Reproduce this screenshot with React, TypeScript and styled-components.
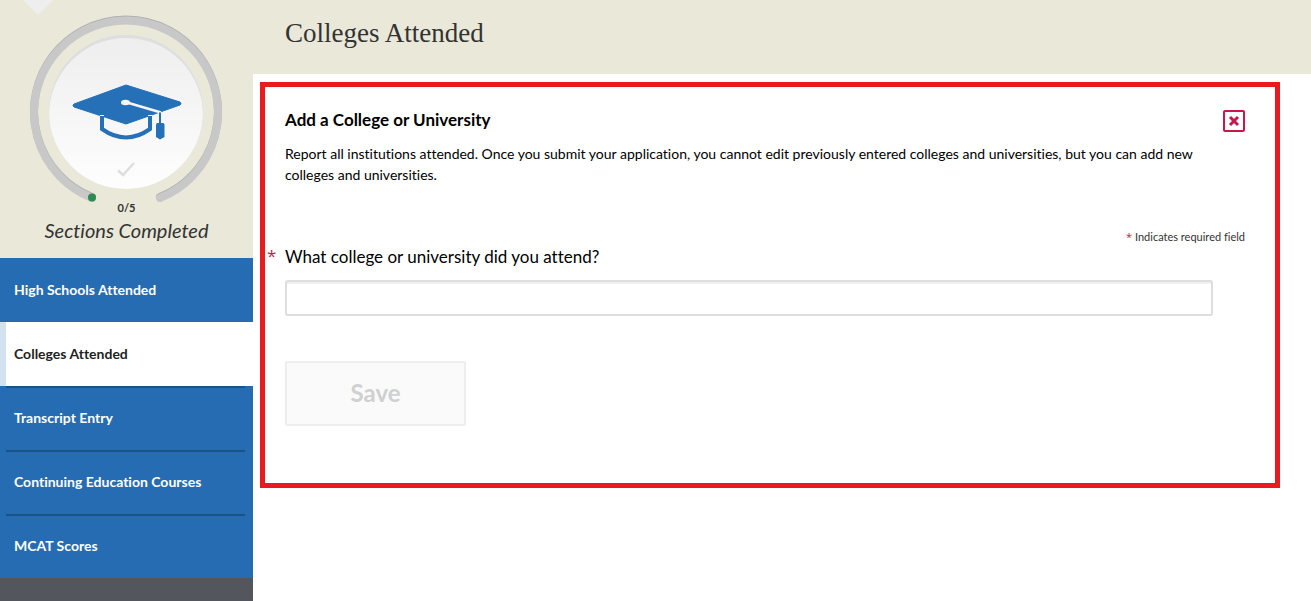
import React, { useState } from "react";
import styled, { createGlobalStyle } from "styled-components";

const GlobalStyle = createGlobalStyle`
  *, *::before, *::after { box-sizing: border-box; }
  body {
    margin: 0;
    background: #fff;
    color: #000;
    font-family: Lato, "Open Sans", sans-serif;
    font-size: 14px;
    line-height: 21px;
    font-variant-ligatures: none;
  }
`;

const Page = styled.div`
  display: flex;
  min-height: 100vh;
`;

const Sidebar = styled.aside`
  flex: 0 0 253px;
  display: flex;
  flex-direction: column;
  background: #53565d;
`;

const Progress = styled.section`
  height: 258px;
  display: flex;
  flex-direction: column;
  align-items: center;
  background: #e9e8d9;
  color: #333;
`;

const Gauge = styled.svg`
  display: block;
  width: 100%;
  height: 202px;
  flex: none;
`;

const Count = styled.div`
  font-size: 11px;
  line-height: 12px;
  font-weight: 700;
`;

const Caption = styled.div`
  margin-top: 4px;
  font-size: 20px;
  line-height: 24px;
  font-style: italic;
`;

const NavList = styled.ul`
  list-style: none;
  margin: 0;
  padding: 0;
`;

const NavItem = styled.li<{ $active?: boolean }>`
  height: 64px;
  padding-right: 8px;
  border-left: 6px solid ${(p) => (p.$active ? "#d3e2ef" : "#266cb2")};
  background: ${(p) => (p.$active ? "#fff" : "#266cb2")};
`;

const NavLink = styled.a<{ $active?: boolean; $ruled?: boolean }>`
  display: flex;
  align-items: center;
  height: 100%;
  padding: 0 0 ${(p) => (p.$ruled ? 4 : 2)}px 8px;
  border-top: ${(p) => (p.$ruled ? "2px solid #1d5287" : "0")};
  color: ${(p) => (p.$active ? "#222" : "#fff")};
  font-size: 14px;
  font-weight: 700;
  text-decoration: none;
`;

const Main = styled.main`
  flex: 1;
  min-width: 0;
`;

const TitleBar = styled.header`
  height: 74px;
  padding: 17px 32px;
  background: #e9e8d9;
`;

const Title = styled.h1`
  margin: 0;
  font-family: "Liberation Serif", serif;
  font-size: 27px;
  line-height: 32px;
  font-weight: 400;
  color: #333;
`;

const Panel = styled.section`
  margin: 8px 31px 24px 7px;
  padding: 21px 30px 57px 20px;
  border: 5px solid #e81b1e;
`;

const PanelHead = styled.div`
  display: flex;
  justify-content: space-between;
  align-items: flex-end;
`;

const PanelTitle = styled.h2`
  margin: 0;
  font-size: 17px;
  line-height: 24px;
  font-weight: 700;
`;

const CloseButton = styled.button`
  display: flex;
  align-items: center;
  justify-content: center;
  width: 22px;
  height: 22px;
  padding: 0;
  border: 2px solid #c8174a;
  border-radius: 2px;
  background: #fff;
  cursor: pointer;
`;

const Intro = styled.p`
  margin: 11px 32px 0 0;
`;

const Note = styled.p`
  margin: 44px 0 0;
  font-size: 11px;
  line-height: 16px;
  text-align: right;
  color: #333;
`;

const Star = styled.span`
  color: #c8174a;
  font-family: "Open Sans", sans-serif;
`;

const FieldLabel = styled.label`
  display: flex;
  margin-left: -18px;
  font-size: 17px;
  line-height: 24px;
`;

const FieldStar = styled(Star)`
  flex: 0 0 18px;
  line-height: 22px;
`;

const TextInput = styled.input`
  display: block;
  width: calc(100% - 32px);
  height: 36px;
  margin-top: 11px;
  padding: 0 10px;
  border: 2px solid #dedede;
  border-radius: 3px;
  box-shadow: inset 0 2px 0 #f0f0f0;
  font: inherit;
`;

const SaveButton = styled.button`
  display: block;
  margin-top: 45px;
  width: 181px;
  height: 65px;
  padding: 0 0 2px;
  border: 2px solid #eee;
  border-radius: 2px;
  background: #fafafa;
  color: #d0d0d0;
  font-family: inherit;
  font-size: 24px;
  font-weight: 700;
`;

const sections = [
  "High Schools Attended",
  "Colleges Attended",
  "Transcript Entry",
  "Continuing Education Courses",
  "MCAT Scores",
];

function ProgressGauge() {
  return (
    <Gauge viewBox="0 0 253 202" aria-hidden="true">
      <defs>
        <linearGradient id="disc" x1="0" y1="0" x2="0" y2="1">
          <stop offset="0" stopColor="#eeeeef" />
          <stop offset="1" stopColor="#fefefe" />
        </linearGradient>
        <clipPath id="discClip">
          <circle cx="126" cy="112" r="77" />
        </clipPath>
      </defs>
      <path d="M23 0H53L38 15Z" fill="#eeeeef" />
      <path d="M92 197A92 92 0 1 1 160 197" fill="none" stroke="#b1b1b1" strokeWidth="8" strokeLinecap="round" />
      <path d="M92 198A92 92 0 1 1 160 198" fill="none" stroke="#c8c8c8" strokeWidth="8" strokeLinecap="round" />
      <circle cx="126" cy="112" r="77" fill="#dedede" />
      <circle cx="126" cy="115" r="77" fill="url(#disc)" clipPath="url(#discClip)" />
      <circle cx="92" cy="197.500" r="4" fill="#2f8a50" />
      <path d="M126 85L180 102Q182 104 180 105L126 124L74 107Q72 105 74 104Z" fill="#2670b8" stroke="#2670b8" strokeWidth="1" strokeLinejoin="round" />
      <path d="M127 102.500L161 112.500" stroke="#f5f5f6" strokeWidth="2.600" fill="none" />
      <ellipse cx="125.500" cy="102.500" rx="4.500" ry="2.800" fill="#f5f5f6" />
      <path d="M102 116V129Q126 146 150 129V116" fill="none" stroke="#2670b8" strokeWidth="4" />
      <path d="M100 115.500H104M148 115.500H152" stroke="#f5f5f6" strokeWidth="1" />
      <path d="M160 112.500V124" stroke="#2670b8" strokeWidth="2" />
      <path d="M157 123H163.500L164.500 124.500V137L160 139.500L156 137V124.500Z" fill="#2670b8" />
      <path d="M118 170.500L123 175L134 163" fill="none" stroke="#dedede" strokeWidth="2.500" />
    </Gauge>
  );
}

export default function App() {
  const [college, setCollege] = useState("");
  return (
    <>
      <GlobalStyle />
      <Page>
        <Sidebar>
          <Progress>
            <ProgressGauge />
            <Count>0/5</Count>
            <Caption>Sections Completed</Caption>
          </Progress>
          <nav>
            <NavList>
              {sections.map((name, i) => (
                <NavItem key={name} $active={i === 1}>
                  <NavLink href="#" $active={i === 1} $ruled={i > 1}>
                    {name}
                  </NavLink>
                </NavItem>
              ))}
            </NavList>
          </nav>
        </Sidebar>
        <Main>
          <TitleBar>
            <Title>Colleges Attended</Title>
          </TitleBar>
          <Panel>
            <PanelHead>
              <PanelTitle>Add a College or University</PanelTitle>
              <CloseButton type="button" aria-label="Close">
                <svg width="12" height="12" viewBox="0 0 12 12" aria-hidden="true">
                  <path d="M2 2L10 10M10 2L2 10" stroke="#c8174a" strokeWidth="3" />
                </svg>
              </CloseButton>
            </PanelHead>
            <Intro>
              Report all institutions attended. Once you submit your application, you cannot edit
              previously entered colleges and universities, but you can add new colleges and
              universities.
            </Intro>
            <Note>
              <Star>*</Star> Indicates required field
            </Note>
            <FieldLabel htmlFor="college">
              <FieldStar>*</FieldStar>
              What college or university did you attend?
            </FieldLabel>
            <TextInput
              id="college"
              type="text"
              required
              value={college}
              onChange={(e) => setCollege(e.target.value)}
            />
            <SaveButton type="button" disabled={!college}>
              Save
            </SaveButton>
          </Panel>
        </Main>
      </Page>
    </>
  );
}
